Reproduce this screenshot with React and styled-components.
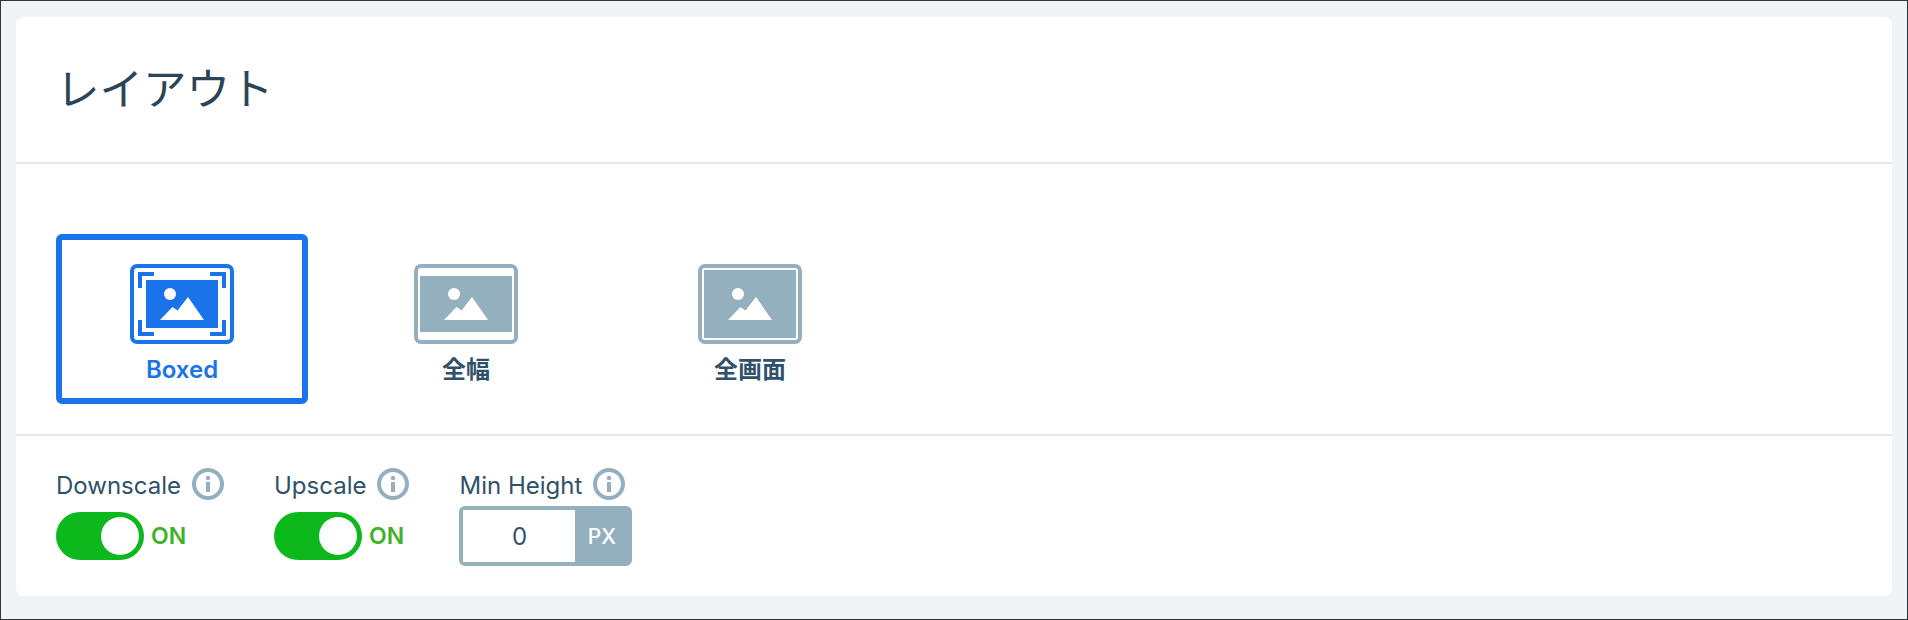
import React from "react";
import styled, { createGlobalStyle } from "styled-components";

const GlobalStyle = createGlobalStyle`
  html, body { margin: 0; padding: 0; }
  body { font-family: Inter, "Noto Sans CJK JP", sans-serif; }
`;

const BLUE = "#1a73e8";
const GREY = "#94b0bf";

const ImageGlyph = () => (
  <>
    <circle cx="40" cy="30" r="6" fill="#fff" />
    <path d="M30 56 L42.5 43 L47.5 46.5 L58 33 L74 56 Z" fill="#fff" />
  </>
);

const BoxedIcon = () => (
  <svg width="104" height="80" viewBox="0 0 104 80">
    <rect x="2" y="2" width="100" height="76" rx="5" fill="#fff" stroke={BLUE} strokeWidth="4" />
    <rect x="16" y="16" width="72" height="48" fill={BLUE} />
    <path
      d="M10 24V10H24M80 10H94V24M10 56V70H24M80 70H94V56"
      fill="none"
      stroke={BLUE}
      strokeWidth="4"
    />
    <ImageGlyph />
  </svg>
);

const WideIcon = () => (
  <svg width="104" height="80" viewBox="0 0 104 80">
    <rect x="2" y="2" width="100" height="76" rx="5" fill="#fff" stroke={GREY} strokeWidth="4" />
    <rect x="6" y="12" width="92" height="56" fill={GREY} />
    <ImageGlyph />
  </svg>
);

const FullIcon = () => (
  <svg width="104" height="80" viewBox="0 0 104 80">
    <rect x="2" y="2" width="100" height="76" rx="5" fill="#fff" stroke={GREY} strokeWidth="4" />
    <rect x="6" y="6" width="92" height="68" fill={GREY} />
    <ImageGlyph />
  </svg>
);

const InfoIcon = () => (
  <svg width="32" height="32" viewBox="0 0 32 32">
    <circle cx="16" cy="16" r="14" fill="none" stroke={GREY} strokeWidth="4" />
    <circle cx="16" cy="10" r="2.2" fill={GREY} />
    <rect x="14" y="14" width="4" height="10" fill={GREY} />
  </svg>
);

const App = () => (
  <Page>
    <GlobalStyle />
    <Card>
      <Header>
        <Title>レイアウト</Title>
      </Header>
      <Layouts>
        <Tile $active>
          <BoxedIcon />
          <TileLabel $active>Boxed</TileLabel>
        </Tile>
        <Tile>
          <WideIcon />
          <TileLabel>全幅</TileLabel>
        </Tile>
        <Tile>
          <FullIcon />
          <TileLabel>全画面</TileLabel>
        </Tile>
      </Layouts>
      <Options>
        <Option>
          <OptionLabel>
            <LabelText>Downscale</LabelText>
            <InfoIcon />
          </OptionLabel>
          <ToggleRow>
            <Toggle>
              <Knob />
            </Toggle>
            <OnText>ON</OnText>
          </ToggleRow>
        </Option>
        <Option>
          <OptionLabel>
            <LabelText>Upscale</LabelText>
            <InfoIcon />
          </OptionLabel>
          <ToggleRow>
            <Toggle>
              <Knob />
            </Toggle>
            <OnText>ON</OnText>
          </ToggleRow>
        </Option>
        <Option>
          <OptionLabel>
            <LabelText>Min Height</LabelText>
            <InfoIcon />
          </OptionLabel>
          <NumberField>
            <NumberInput>0</NumberInput>
            <Unit>PX</Unit>
          </NumberField>
        </Option>
      </Options>
    </Card>
  </Page>
);

const Page = styled.div`
  box-sizing: border-box;
  width: 1908px;
  height: 620px;
  padding: 16px 15px 0;
  background: #f0f4f7;
  border: 1px solid #2f363b;
  overflow: hidden;
`;
const Card = styled.div`
  height: 579px;
  background: #fff;
  border-radius: 8px;
`;
const Header = styled.div`
  box-sizing: border-box;
  height: 147px;
  display: flex;
  align-items: center;
  padding: 0 0 6px 40px;
  border-bottom: 2px solid #e6e9eb;
`;
const Title = styled.h1`
  margin: 0;
  font-family: "Noto Sans CJK JP", sans-serif;
  font-size: 43.5px;
  font-weight: 400;
  color: #2b4557;
`;
const Layouts = styled.div`
  box-sizing: border-box;
  height: 272px;
  display: flex;
  gap: 32px;
  padding: 70px 40px 0;
  border-bottom: 2px solid #e6e9eb;
`;
const Tile = styled.div`
  box-sizing: border-box;
  width: 252px;
  height: 170px;
  display: flex;
  flex-direction: column;
  align-items: center;
  gap: 9px;
  padding-top: 24px;
  border: 6px solid ${(p) => (p.$active ? BLUE : "transparent")};
  border-radius: 6px;
`;
const TileLabel = styled.span`
  font-family: Inter, "Noto Sans CJK JP", sans-serif;
  font-size: 24px;
  line-height: 34px;
  font-weight: 600;
  color: ${(p) => (p.$active ? BLUE : "#2f5169")};
`;
const Options = styled.div`
  display: flex;
  gap: 50px;
  padding: 32px 40px 0;
`;
const Option = styled.div`
  display: flex;
  flex-direction: column;
`;
const OptionLabel = styled.div`
  display: flex;
  align-items: center;
  gap: 11px;
  height: 32px;
  font-size: 24px;
  color: #2f5169;
`;
const LabelText = styled.span`
  padding-top: 3px;
`;
const ToggleRow = styled.div`
  display: flex;
  align-items: center;
  gap: 7px;
  margin-top: 12px;
`;
const Toggle = styled.div`
  box-sizing: border-box;
  width: 88px;
  height: 48px;
  display: flex;
  justify-content: flex-end;
  padding: 5px;
  border-radius: 24px;
  background: #0db81c;
`;
const Knob = styled.div`
  width: 38px;
  height: 38px;
  border-radius: 50%;
  background: #fff;
`;
const OnText = styled.span`
  font-size: 23px;
  font-weight: 600;
  color: #3fb12c;
`;
const NumberField = styled.div`
  box-sizing: border-box;
  width: 173px;
  height: 60px;
  display: flex;
  margin-top: 6px;
  border: 4px solid ${GREY};
  border-radius: 6px;
`;
const NumberInput = styled.div`
  width: 112px;
  display: flex;
  align-items: center;
  justify-content: center;
  font-size: 24px;
  color: #2f5169;
  background: #fff;
`;
const Unit = styled.div`
  flex: 1;
  display: flex;
  align-items: center;
  justify-content: center;
  font-size: 21px;
  font-weight: 500;
  color: #fff;
  background: ${GREY};
`;

export default App;
